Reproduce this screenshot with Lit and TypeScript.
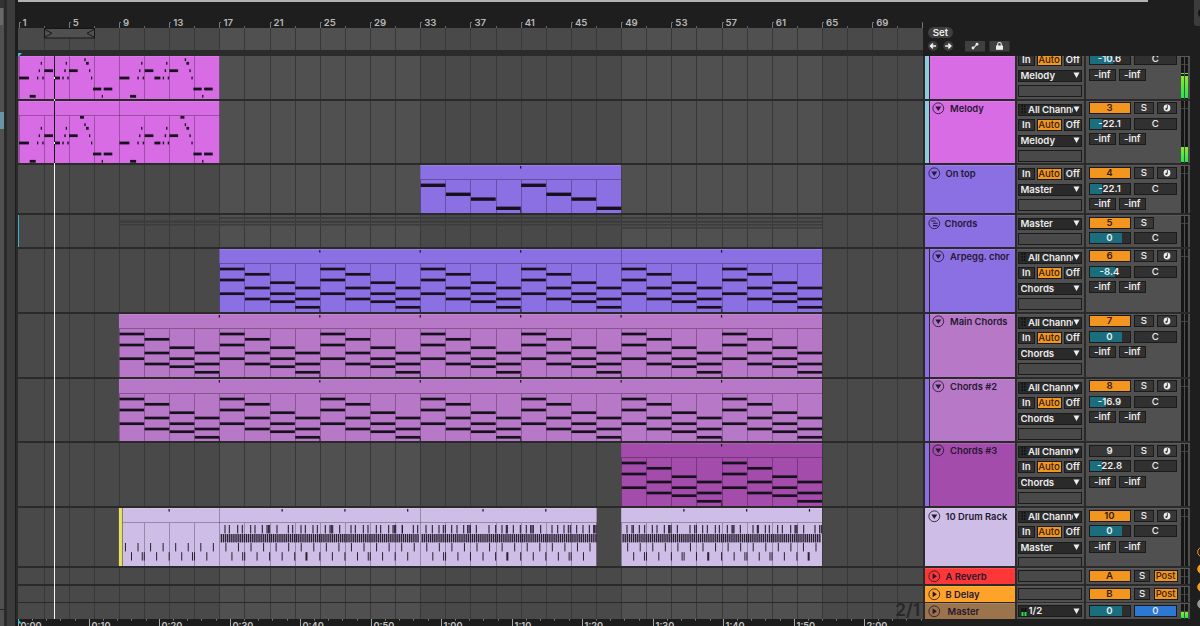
import { LitElement, html, svg, css, nothing } from "lit";
import { customElement, property } from "lit/decorators.js";
import { styleMap } from "lit/directives/style-map.js";

const BAR = 12.555;
const bx = (bar: number) => 0.5 + (bar - 1) * BAR;
const LANE_W = 905;

type Kind = "melody" | "single" | "chords" | "drums";
interface Clip { from: number; to: number; kind: Kind; color: string; ticks?: number[]; joints?: number[] }
interface Track {
  h: number; sep: number; name?: string; color: string; group?: string; icon?: "down" | "group" | "play";
  cut?: number; input?: boolean; monitor?: boolean; out?: string; num?: string; on?: boolean;
  vol?: string; fill?: number; sends?: boolean; type?: "return" | "master" | "group"; tight?: boolean;
  meter?: number; peak?: number; clips?: Clip[]; pad?: number; namePad?: number;
}

const PINK = "#d86ce4", VIOLET = "#8b70e4", ORCHID = "#b878c8", PURPLE = "#a44cac", LILAC = "#cebde6", CYAN = "#8fcbdc";
const eights = [17, 25, 33, 41, 49, 57];

const tracks: Track[] = [
  { h: 43, sep: 2, color: PINK, group: CYAN, cut: 20, input: true, monitor: true, out: "Melody", num: "2", on: true, vol: "-10.6", fill: 58, sends: true, meter: 22, peak: 16, clips: [{ from: 1, to: 17, kind: "melody", color: PINK }] },
  { h: 62, sep: 2, name: "Melody", icon: "down", color: PINK, group: CYAN, tight: true, input: true, monitor: true, out: "Melody", num: "3", on: true, vol: "-22.1", fill: 30, sends: true, meter: 15, clips: [{ from: 1, to: 17, kind: "melody", color: PINK, joints: [9] }] },
  { h: 48, sep: 2, name: "On top", icon: "down", color: VIOLET, monitor: true, out: "Master", num: "4", on: true, vol: "-22.1", fill: 30, sends: true, pad: 1, clips: [{ from: 33, to: 49, kind: "single", color: VIOLET, ticks: [41] }] },
  { h: 32, sep: 2, name: "Chords", icon: "group", color: VIOLET, type: "group", out: "Master", num: "5", on: true, vol: "0", fill: 82, namePad: -1 },
  { h: 63, sep: 2, name: "Arpegg. chor", icon: "down", color: VIOLET, group: VIOLET, tight: true, input: true, monitor: true, out: "Chords", num: "6", on: true, vol: "-8.4", fill: 63, sends: true, clips: [{ from: 17, to: 65, kind: "chords", color: VIOLET, ticks: [25, 33, 41, 57], joints: [49] }] },
  { h: 63, sep: 2, name: "Main Chords", icon: "down", color: ORCHID, group: VIOLET, tight: true, input: true, monitor: true, out: "Chords", num: "7", on: true, vol: "0", fill: 82, sends: true, clips: [{ from: 9, to: 65, kind: "chords", color: ORCHID, ticks: eights }] },
  { h: 62, sep: 2, name: "Chords #2", icon: "down", color: ORCHID, group: VIOLET, tight: true, input: true, monitor: true, out: "Chords", num: "8", on: true, vol: "-16.9", fill: 42, sends: true, clips: [{ from: 9, to: 65, kind: "chords", color: ORCHID, ticks: eights }] },
  { h: 63, sep: 2, name: "Chords #3", icon: "down", color: PURPLE, group: VIOLET, input: true, monitor: true, out: "Chords", num: "9", on: false, vol: "-22.8", fill: 30, sends: true, clips: [{ from: 49, to: 65, kind: "chords", color: PURPLE, ticks: [57] }] },
  { h: 58, sep: 2, name: "10 Drum Rack", icon: "down", color: LILAC, input: true, monitor: true, out: "Master", num: "10", on: true, vol: "0", fill: 82, sends: true, clips: [
    { from: 9, to: 47.05, kind: "drums", color: LILAC, ticks: [13, 22, 27, 32, 38, 43], joints: [17, 33] },
    { from: 49, to: 65, kind: "drums", color: LILAC, ticks: [54, 59, 64] }] },
  { h: 16, sep: 2, name: "A Reverb", icon: "play", color: "#fd3737", type: "return", num: "A", on: true },
  { h: 16, sep: 1, name: "B Delay", icon: "play", color: "#fea32a", type: "return", num: "B", on: true },
  { h: 16, sep: 0, name: "Master", icon: "play", color: "#9c744c", type: "master", out: "1/2", vol: "0", fill: 82, meter: 6, namePad: 2 },
];

// Melody notes: start, end (px from the phrase start), y in the lane
const melody: number[][] = [
  [1, 11, 42], [11.7, 17.7, 60.3], [19, 20.3, 42], [20.7, 22, 34.7], [22.7, 24, 27.3], [24.3, 25.7, 42],
  [26.3, 35, 34.7], [36, 42, 42], [44.3, 45.7, 42], [46.3, 47.7, 34.7], [47.7, 49, 27.3], [49.3, 50.7, 42],
  [51, 59.7, 34.7], [62, 66, 16.3], [66.3, 67.7, 23.7], [68, 70.7, 27.3], [71, 72.3, 34.7], [73, 74.3, 42],
  [75, 83.3, 53], [85.7, 94.3, 53], [83.7, 85, 60.3],
];
const chordRows = [[20, 31, 44.7], [25.3, 39, 50], [33.7, 44.7, 52.7], [39, 50, 58.3]];
const singleRows = [[20.3], [29.3], [34.1], [43.3]];

const hatsFirst: number[] = [
  ...[45, 58, 83, 97, 122, 135, 157, 171, 175, 178, 201, 235, 248, 273, 286, 309, 322, 346, 360, 364, 368, 389, 423, 436, 460, 474, 499, 512, 536, 549, 553, 557, 577].map((v) => 192 + v / 3),
  ...[7, 40, 53, 78, 97, 117, 130, 136, 155, 171, 191, 203, 207, 211, 229, 267, 287, 306, 319, 322, 340, 361, 379, 392, 396, 400, 422, 456, 473, 492, 505, 511, 530, 549, 568, 581, 584, 588].map((v) => 382 + v / 3),
];
const hatsSecond = [81, 96, 100, 118, 134, 157, 171, 193, 206, 209, 213, 232, 270, 284, 289, 308, 322, 346, 358, 382, 396, 399, 402, 421, 459, 472, 475, 496, 508, 533, 547, 572, 585, 588, 591, 611, 645, 659, 664].map((v) => 582 + v / 3);

// Bars where two kick hits fall close together, and where they merge
const doubled = [11, 15, 19, 29, 35, 45, 51, 54, 59, 61];
const merged = [24, 40, 56, 64];

const note = (x: number, y: number, w: number, h: number) => svg`<rect x=${x} y=${y} width=${w} height=${h} fill="#17111d"/>`;
const hit = (x: number, y: number, w = 1) => svg`<rect x=${x - w / 2} y=${y} width=${w} height="8.4" fill="#1a1322" fill-opacity="0.92"/>`;

function drums(c: Clip) {
  const out: unknown[] = [];
  const first = c.from === 9;
  for (let b = c.from; b < c.to - 0.6; b++) out.push(hit(bx(b + 0.52), 35));
  const skip = [9, 17, 33, 49];
  for (let b = c.from; b < c.to - 0.9; b++) {
    if (skip.includes(b)) continue;
    if (merged.includes(b)) out.push(hit(bx(b) - 0.8, 44.2, 2));
    else if (doubled.includes(b)) out.push(hit(bx(b) - 1.8, 44.2), hit(bx(b) + 0.2, 44.2));
    else out.push(hit(bx(b), 44.2));
  }
  (first ? hatsFirst : hatsSecond).forEach((x) => out.push(hit(x, 17, 1.1)));
  const start = first ? 17 : 49;
  for (let x = bx(start) + 2; x < bx(c.to) - 0.6; x += BAR / 6) {
    if (first && Math.abs(x - bx(33)) < 1.4) continue;
    out.push(hit(x, 26, 1.4));
  }
  return out;
}

function clipNotes(c: Clip, track: Track) {
  if (c.kind === "drums") return drums(c);
  if (c.kind === "melody") {
    const dy = track.cut ? -20 : 0;
    return [0, 100.4].map((o) => melody.filter((n) => n[2] + dy > 0).map(([a, b, y]) => note(o + a, y + dy - 1.4, b - a, 2.8)));
  }
  const rows = c.kind === "single" ? singleRows : chordRows;
  const h = c.kind === "single" ? 3.4 : 2.7;
  const out: unknown[] = [];
  for (let b = c.from, i = 0; b < c.to; b += 2, i++)
    for (const y of rows[i % 4]) out.push(note(bx(b) + 0.5, y - h / 2, BAR * 2 - 0.4, h));
  return out;
}

function drawClip(c: Clip, t: Track) {
  const x = bx(c.from), w = bx(c.to) - x, head = t.cut ? 0 : 15;
  const lines: unknown[] = [];
  for (let b = c.from; b < c.to; b += 2) lines.push(svg`<rect x=${Math.round(bx(b))} y=${head} width="1" height=${t.h - head} fill="#000" fill-opacity="0.27"/>`);
  return svg`
    <rect x=${x} y="0" width=${w} height=${t.h} fill=${c.color}/>
    <rect x=${x} y="0" width=${w} height="1" fill="#fff" fill-opacity="0.1"/>
    ${lines}
    ${head ? svg`<rect x=${x} y="14" width=${w} height="1" fill="#000" fill-opacity="0.28"/>` : nothing}
    ${(c.joints ?? []).map((b) => svg`<rect x=${Math.round(bx(b))} y="0" width="1" height="15" fill="#000" fill-opacity="0.27"/>`)}
    ${clipNotes(c, t)}
    ${(c.ticks ?? []).map((b) => svg`<rect x=${bx(b) - 0.6} y="1" width="1.2" height="2.6" fill="#1b1424"/>
      ${c.kind === "drums" ? nothing : svg`<rect x=${bx(b) - 0.6} y=${t.h - 3} width="1.2" height="3" fill="#1b1424" fill-opacity="0.7"/>`}`)}
    ${c.kind === "drums" && c.from === 9 ? svg`<rect x=${x} y="0" width="3" height=${t.h} fill="#e9e25e"/><rect x=${x + 3} y="0" width="1" height=${t.h} fill="#84804e"/>` : nothing}`;
}

function gridBack(h: number) {
  const bands: unknown[] = [], lines: unknown[] = [];
  for (const b of [17, 49]) bands.push(svg`<rect x=${bx(b)} y="0" width=${BAR * 16} height=${h} fill="#505050"/>`);
  for (let b = 3; b <= 71; b += 2) lines.push(svg`<rect x=${Math.round(bx(b))} y="0" width="1" height=${h} fill="#383838"/>`);
  return svg`<rect width=${LANE_W} height=${h} fill="#494949"/>${bands}${lines}`;
}

@customElement("track-lane")
class TrackLane extends LitElement {
  @property({ attribute: false }) track!: Track;
  static styles = css`
    :host { display: block; background: #2a2a2a; }
    svg { display: block; overflow: visible; }
    text { font: 700 17px Inter, sans-serif; fill: #292929; }
  `;
  render() {
    const t = this.track;
    const over = t.clips?.some((c) => c.from === 1);
    return html`<svg width=${LANE_W} height=${t.h + t.sep}>
      ${gridBack(t.h)}
      ${t.type === "group" ? svg`
        <g fill="#3d3d3d">
          <rect x=${bx(17)} y="2" width=${BAR * 48} height="2"/>
          <rect x=${bx(9)} y="5.500" width=${BAR * 56} height="2.500"/>
          <rect x=${bx(9)} y="9" width=${BAR * 56} height="1.600"/>
          <rect x=${bx(49)} y="12" width=${BAR * 16} height="1.600"/>
        </g><rect width="1" height=${t.h} fill="#35b5cf"/>` : nothing}
      ${(t.clips ?? []).map((c) => drawClip(c, t))}
      <rect x="36" y="0" width="1" height=${t.h + t.sep} fill="#f6f6f6"/>
      ${over ? svg`<rect x="36" y="0" width="1" height=${t.h} fill="#130d16"/><rect x="36" y=${t.cut ? 21 : 41} width="1" height="2" fill="#fff"/>` : nothing}
      ${t.type === "master" ? svg`<text x="902" y="13" text-anchor="end">2/1</text>` : nothing}
    </svg>`;
  }
}

@customElement("track-strip")
class TrackStrip extends LitElement {
  @property({ attribute: false }) track!: Track;
  static styles = css`
    :host { display: flex; width: 265px; overflow: hidden; font: 600 9.6px/12px Inter, sans-serif; color: #ececec; }
    * { box-sizing: border-box; }
    .rail { width: 4px; flex: none; margin-right: 1px; margin-bottom: -2px; }
    .name { flex: 1; min-width: 0; display: flex; align-items: flex-start; gap: 5px; padding: 1.5px 0 0 2.5px; color: #251830; font-size: 9.4px; white-space: nowrap; box-shadow: inset 0 1px rgba(255,255,255,.12); }
    .rail + .name { padding: 1px 0 0 2px; }
    .name svg { flex: none; }
    .name span { line-height: 14px; }
    .cell { background: #505050; box-shadow: inset 0 1px #5a5a5a; flex: none; height: 100%; }
    .io { width: 67px; margin-left: 2px; padding: 2.5px 2px 0 1px; }
    .mix { width: 104px; margin-left: 2px; display: flex; justify-content: space-between; padding: 1.5px 2px 0 2.5px; }
    .mix.tight { padding-top: 1px; }
    .stack { display: flex; flex-direction: column; gap: 3.5px; }
    .tight .stack { margin-right: 0; }
    .row { display: flex; gap: 3.5px; height: 12px; }
    .box { height: 12px; flex: none; border: 1px solid #1b1b1b; background: #313131; text-align: center; line-height: 10px; white-space: nowrap; }
    .on { background: #f39620; color: #33200b; }
    .off { background: #383838; }
    .empty { background: #494949; }
    .menu { display: flex; align-items: center; text-align: left; padding: 0 1px 0 1.5px; background: #2a2a2a; }
    .menu span { flex: 1; min-width: 0; overflow-x: clip; overflow-y: visible; }
    .menu svg { flex: none; }
    .all { padding-left: 2px; }
    .all span { letter-spacing: -0.1px; }
    .all svg:first-child { margin-right: 2px; }
    .w16 { width: 16.5px; } .w25 { width: 25px; } .w18 { width: 18.5px; font-size: 9.4px; }
    .io .row { gap: 2px; }
    .w42 { width: 42px; } .w19 { width: 19.5px; } .w27 { width: 27.5px; } .w43 { width: 42.5px; }
    .s { font-weight: 500; }
    .rec { display: flex; align-items: center; justify-content: center; }
    .vol { position: relative; background: #2e2e2e; }
    .fill { position: absolute; inset: 0 auto 0 0; background: #1a6e7d; }
    .vol span { position: relative; }
    .send { gap: 2.5px; }
    .w16s { width: 16px; } .post { width: 24px; font-weight: 500; font-size: 9.3px; }
    .blue { background: #2c78d2; }
    .slim { padding-top: 2px; }
    .meters { display: flex; gap: 1px; margin-top: -1px; width: 7px; }
    .meter { width: 3px; background: #161616; display: flex; flex-direction: column; justify-content: flex-end; position: relative; }
    .meter::before { content: ""; position: absolute; top: 7px; height: 1px; width: 3px; background: #404040; }
    .level { background: linear-gradient(#8bea2c, #1fe84c); margin-bottom: 1px; }
    .peak { position: absolute; height: 1px; width: 3px; background: #7ce62c; }
  `;

  icon(kind: string) {
    return svg`<svg width="13" height="13" viewBox="0 0 13 13">
      <circle cx="6.3" cy="6.3" r="5.4" fill="none" stroke="#251830" stroke-width="1" stroke-opacity="0.85"/>
      ${kind === "down" ? svg`<path d="M3.3 4.6h6L6.3 8.9z" fill="#251830"/>`
        : kind === "play" ? svg`<path d="M4.6 3.3v6L8.9 6.3z" fill="#251830"/>`
        : svg`<path d="M3.2 4h4.4M5 6.3h4.6M5 8.6h4.6" stroke="#251830" stroke-width="1.1" fill="none"/>`}
    </svg>`;
  }
  arrow() { return svg`<svg width="7" height="7" viewBox="0 0 7 7"><path d="M.5 .6h6L3.5 6z" fill="#f0f0f0"/></svg>`; }

  render() {
    const t = this.track;
    const ret = t.type === "return", master = t.type === "master", slim = ret || master;
    const shift = t.cut ? -t.cut : (t.pad ?? 0) / 2;
    const hold = { marginTop: `${shift}px` };
    return html`
      ${t.group ? html`<div class="rail" style=${styleMap({ background: t.group })}></div>` : nothing}
      <div class="name" style=${styleMap({ background: t.color })}>
        ${t.icon ? this.icon(t.icon) : nothing}
        ${t.name ? html`<span style=${styleMap({ marginLeft: `${t.namePad ?? 0}px` })}>${t.name}</span>` : nothing}
      </div>
      <div class="cell io ${slim ? "slim" : ""}">
        <div class="stack" style=${styleMap(hold)}>
          ${t.input && !t.cut ? html`<div class="box menu all"><svg width="5" height="9"><path d="M1.2 0v9M3.8 0v9" stroke="#111" stroke-width="1.4" stroke-dasharray="2 1"/></svg><span>All Channels</span>${this.arrow()}</div>` : t.cut ? html`<div class="box menu"></div>` : nothing}
          ${t.monitor ? html`<div class="row"><div class="box w16">In</div><div class="box on w25 s">Auto</div><div class="box w18">Off</div></div>` : nothing}
          ${t.out ? html`<div class="box menu">${master ? html`<svg width="8" height="9"><path d="M1.5 1v8M4.5 1v8" stroke="#111" stroke-width="2"/><path d="M1.5 5v4M4.5 5v4" stroke="#2be04a" stroke-width="2"/></svg>` : nothing}<span>${t.out}</span>${this.arrow()}</div>` : nothing}
          ${master ? nothing : html`<div class="box empty"></div>`}
        </div>
      </div>
      <div class="cell mix ${slim ? "slim" : ""} ${t.tight ? "tight" : ""}">
        <div class="stack" style=${styleMap(hold)}>
          ${t.num ? html`<div class="row">
            ${t.cut ? nothing : html`<div class="box w42 ${t.on ? "on" : "off"}">${t.num}</div>
            <div class="box off s ${ret ? "w16s" : "w19"}">S</div>`}
            ${t.cut || t.type === "group" ? nothing : ret ? html`<div class="box on post">Post</div>` : html`<div class="box off w19 rec"><svg width="8" height="8" viewBox="0 0 8 8"><circle cx="4" cy="4" r="3.4" fill="#ececec"/><path d="M4.4 1.200v3.400" stroke="#333" stroke-width="0.9"/><circle cx="3.4" cy="4.900" r="1.050" fill="#333"/></svg></div>`}
          </div>` : nothing}
          ${t.vol ? html`<div class="row">
            <div class="box vol w42"><div class="fill" style=${styleMap({ width: `${t.fill}%` })}></div><span>${t.vol}</span></div>
            <div class="box w43 s ${master ? "blue" : ""}">${master ? "0" : "C"}</div>
          </div>` : nothing}
          ${t.sends ? html`<div class="row send"><div class="box w27">-inf</div><div class="box w27">-inf</div></div>` : nothing}
        </div>
        <div class="meters">${[0, 1].map(() => html`<div class="meter">
          ${t.peak ? html`<div class="peak" style=${styleMap({ top: `${t.peak}px` })}></div>` : nothing}
          <div class="level" style=${styleMap({ height: `${t.meter ?? 0}px` })}></div></div>`)}</div>
      </div>`;
  }
}

@customElement("app-root")
class AppRoot extends LitElement {
  static styles = css`
    :host { display: flex; width: 1200px; height: 626px; background: #1e1e1e; overflow: hidden; font-family: Inter, sans-serif; }
    svg { display: block; }
    .side { flex: none; width: 18px; }
    .main { flex: none; width: 1172px; display: flex; flex-direction: column; }
    .top { height: 2px; width: 1130px; background: #b3b3b3; flex: none; }
    .cols { display: flex; gap: 2px; flex: 1; background: #1e1e1e; }
    .arr { width: 905px; flex: none; background: #2a2a2a; }
    .strips { width: 265px; flex: none; }
    .tools { height: 54px; display: flex; flex-direction: column; }
    .rows { display: grid; background: #2a2a2a; box-shadow: -2px 0 #2a2a2a; }
    .num { font: 600 9.6px Inter, sans-serif; fill: #b9b9b9; }
    .time { font: 600 9.2px Inter, sans-serif; fill: #c4c4c4; }
    .set { margin: 25px 0 0 3px; width: 25px; height: 11px; border-radius: 6px; background: #3f3f3f; color: #f0f0f0; font: 600 9.6px/11px Inter, sans-serif; text-align: center; }
    .nav { margin: 3px 0 0 3px; }
  `;

  ruler() {
    const marks: unknown[] = [];
    for (let b = 1; b <= 73; b += 2) {
      const x = Math.round(bx(b)), major = b % 4 === 1;
      marks.push(major
        ? svg`<path d="M${x + 0.5} 26v-5.500h1.500" stroke="#777" fill="none"/>${b < 73 ? svg`<text class="num" x=${bx(b) + 4} y="24">${b}</text>` : nothing}`
        : svg`<path d="M${x + 0.5} 24v2" stroke="#666"/>`);
    }
    return svg`<svg width="905" height="54">
      <rect width="905" height="26" fill="#1e1e1e"/>${marks}
      <g transform="translate(0 26)">${gridBack(22)}</g>
      <rect y="48" width="905" height="6" fill="#2b2b2b"/>
      <rect x="26.500" y="26.500" width="50" height="9.500" fill="#505050" stroke="#161616"/>
      <path d="M27 27.500l7 3.800-7 3.800M76 27.500l-7 3.800 7 3.800" fill="none" stroke="#1a1a1a"/>
      <path d="M0 51h4L0.800 54.500H0z" fill="#3cc0dc"/>
    </svg>`;
  }

  clock() {
    const marks: unknown[] = [];
    for (let i = 0; i <= 12; i++) {
      const x = Math.round(0.3 + i * 70.5);
      marks.push(svg`<path d="M${x + 0.5} 0v7" stroke="#aaa"/><text class="time" x=${x + 2.5} y="10">${Math.floor(i / 6)}:${i % 6}0</text>`);
      for (let k = 1; k < 5; k++) marks.push(svg`<path d="M${Math.round(x + k * 14.13) + 0.5} 0v1.500" stroke="#8a8a8a"/>`);
    }
    return svg`<svg width="905" height="7"><rect width="905" height="7" fill="#1c1c1c"/>${marks}<path d="M0 .5l4 4H0z" fill="#3cc0dc"/></svg>`;
  }

  render() {
    const rows = { gridTemplateRows: tracks.map((t) => `${t.h + t.sep}px`).join(" ") };
    return html`
      <svg class="side" width="18" height="626">
        <rect width="4" height="626" fill="#505050"/><rect width="4" height="8" fill="#333"/>
        <rect y="8" width="3" height="17" fill="#696969"/><rect y="112" width="4" height="17" fill="#6794a6"/>
        <rect y="609" width="4" height="1" fill="#222"/>
        <rect x="4" width="3" height="626" fill="#2a2a2a"/><rect x="7" width="8" height="626" fill="#3c3c3c"/>
        <rect x="15" width="3" height="626" fill="#1c1c1c"/>
      </svg>
      <div class="main">
        <div class="top"></div>
        <div class="cols">
          <div class="arr">
            ${this.ruler()}
            <div class="rows" style=${styleMap(rows)}>${tracks.map((t) => html`<track-lane .track=${t}></track-lane>`)}</div>
            ${this.clock()}
          </div>
          <div class="strips">
            <div class="tools">
              <div class="set">Set</div>
              <svg class="nav" width="90" height="12">
                <circle cx="5" cy="5" r="5" fill="#3d3d3d"/><circle cx="20.300" cy="5" r="5" fill="#3d3d3d"/>
                <path d="M8 5H3.200M5 2.600L2.500 5 5 7.400M17.200 5h4.800M20.300 2.600L22.800 5l-2.500 2.400" stroke="#f2f2f2" stroke-width="1.500" fill="none"/>
                <rect x="37" width="20" height="10.500" fill="#3f3f3f"/><rect x="61.500" width="20" height="10.500" fill="#3f3f3f"/>
                <path d="M45 7.300l4-4" stroke="#eee" stroke-width="1.100"/><circle cx="45" cy="7" r="1.400" fill="#eee"/><circle cx="49" cy="3.200" r="1.400" fill="#eee"/>
                <rect x="68" y="4.500" width="7" height="4.300" fill="#eee"/><path d="M69.700 5V3.300a1.800 1.800 0 0 1 3.600 0V5" stroke="#eee" stroke-width="1.100" fill="none"/>
              </svg>
            </div>
            <div class="rows" style=${styleMap(rows)}>${tracks.map((t) => html`<track-strip .track=${t} style=${styleMap({ height: `${t.h}px` })}></track-strip>`)}</div>
          </div>
        </div>
      </div>
      <svg width="10" height="626">
        <path d="M4 0h6v26H7a3 3 0 0 1-3-3z" fill="#3c3c3c"/><circle cx="13" cy="13" r="5" fill="#151515"/>
        ${[552, 569, 587, 604].map((y, i) => svg`<circle cx="12.500" cy=${y} r="4.800" fill=${i === 0 ? "none" : i === 3 ? "#999" : "#f39a26"} stroke=${i === 3 ? "#999" : "#f39a26"}/>`)}
      </svg>`;
  }
}
